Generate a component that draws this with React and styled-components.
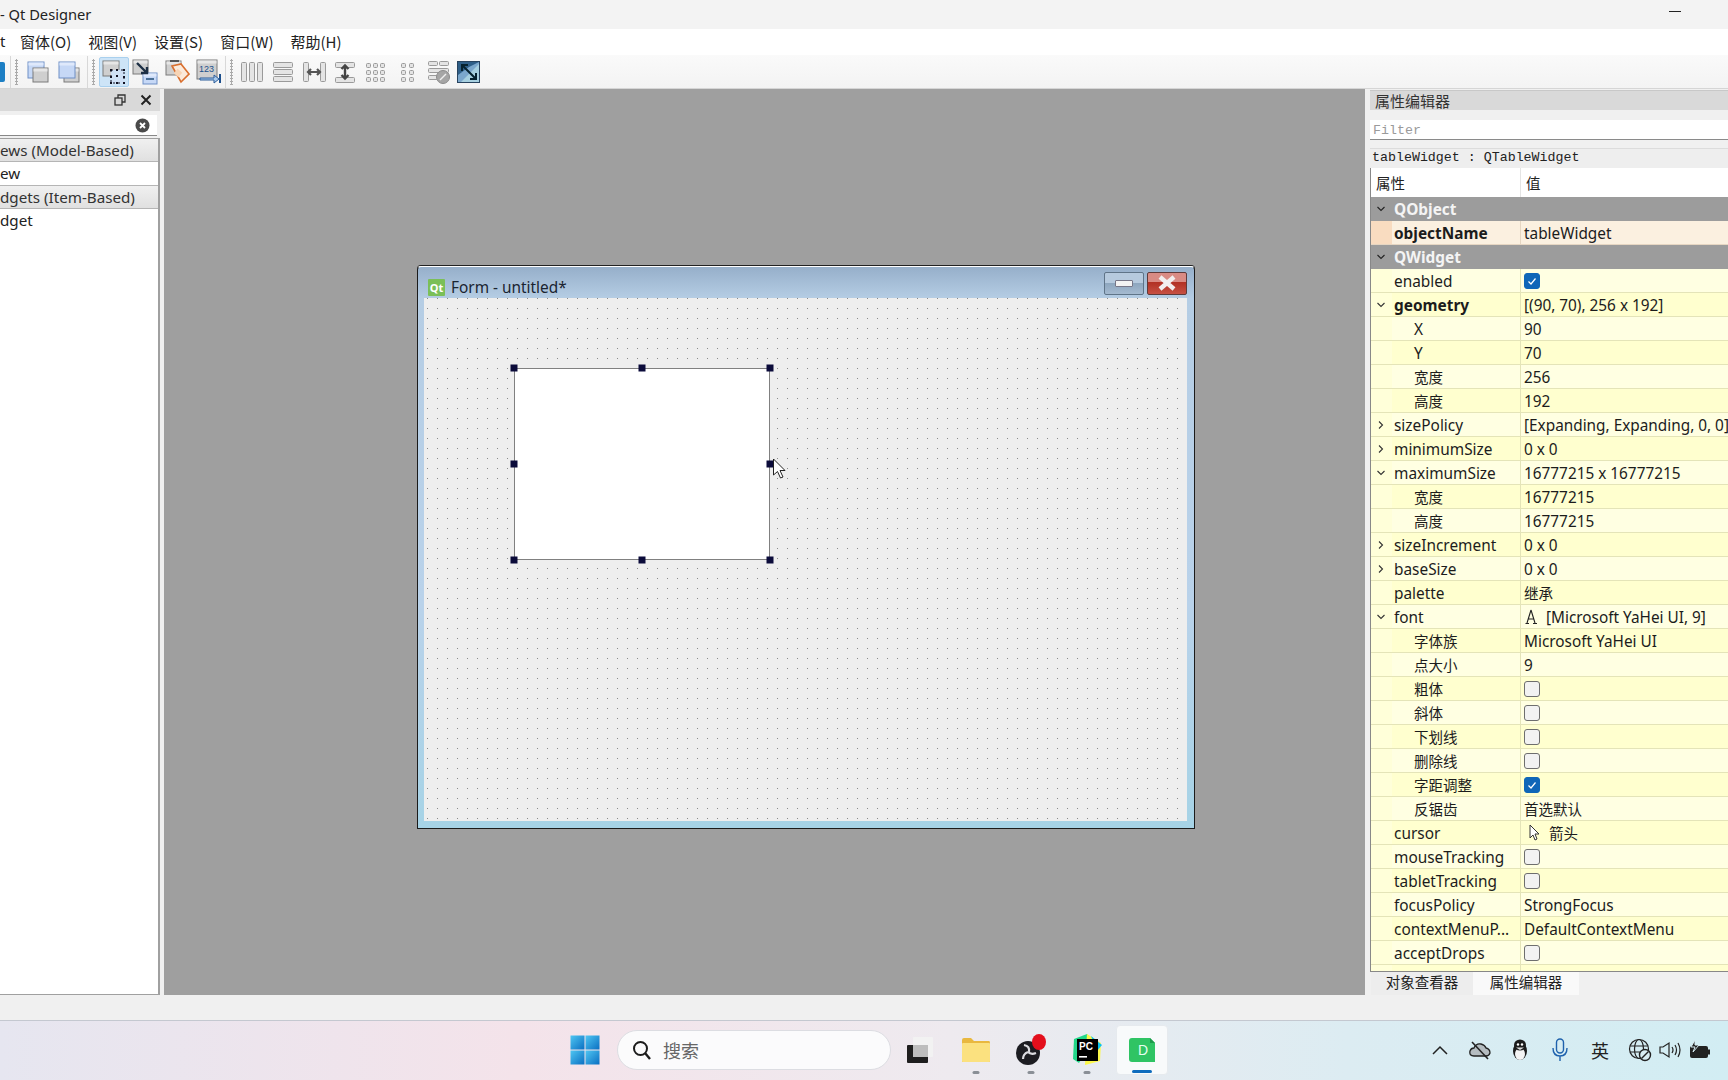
import React from 'react';
import styled, { createGlobalStyle } from 'styled-components';

const UI = '"Noto Sans", "Noto Sans CJK SC", sans-serif';
const CJK = '"Noto Sans CJK SC", "Noto Sans", sans-serif';
const MONO = '"Liberation Mono", "Noto Sans CJK SC", monospace';

const Global = createGlobalStyle`
  html, body { margin: 0; padding: 0; width: 1728px; height: 1080px; overflow: hidden; background: #f0f0f0; }
  * { box-sizing: border-box; }
`;

const Screen = styled.div`
  width: 1728px; height: 1080px; display: flex; flex-direction: column;
  font-family: ${UI}; font-size: 15px; color: #1c1c1c; overflow: hidden;
`;
const TitleBar = styled.div`
  height: 29px; flex: none; background: #f3f3f3; display: flex; align-items: center; padding-bottom: 2px;
  justify-content: space-between; font-size: 14.7px; padding-right: 47px; color: #222;
`;
const MinDash = styled.div`width: 12px; height: 1px; background: #222; margin-bottom: 4px;`;
const MenuBar = styled.div`
  height: 26px; flex: none; background: #fff; display: flex; align-items: center; gap: 17px; padding-bottom: 2px;
  font-family: ${CJK}; font-size: 15px; color: #222;
`;
const MenuClip = styled.span`width: 3px; font-family: ${UI}; white-space: nowrap;`;
const ToolBar = styled.div`
  height: 34px; flex: none; background: linear-gradient(#fafafa, #f3f3f3); padding-top: 1px;
  display: flex; align-items: center; border-bottom: 1px solid #d5d5d5; overflow: hidden;
`;
const ToolGroup = styled.div`display: flex; align-items: center; gap: ${p => p.$gap ?? 5}px;`;
const ToolSep = styled.div`
  width: 1px; height: 32px; background: #d8d8d8; margin: 0 ${p => p.$r ?? 4}px 0 ${p => p.$l ?? 4}px;
`;
const Grip = styled.div`
  width: 3px; height: 26px; margin-right: ${p => p.$r ?? 6}px;
  background-image: radial-gradient(circle at 1.5px 1.5px, #aaa 1px, transparent 1.2px);
  background-size: 3px 3px;
`;
const ToolBtn = styled.div`
  width: ${p => p.$w ?? 26}px; height: 30px; flex: none; display: flex; align-items: center; justify-content: center;
  ${p => p.$active && 'background: #cde4f7; border: 1px solid #a9d0ee; border-radius: 2px;'}
`;
const Main = styled.div`flex: 1; display: flex; min-height: 0; background: #f0f0f0;`;
const LeftDock = styled.div`width: 160px; flex: none; display: flex; flex-direction: column;`;
const DockHead = styled.div`
  height: 22px; flex: none; background: #d9d9d9; display: flex; align-items: center; justify-content: flex-end;
  gap: 14px; padding-right: 8px; color: #222;
`;
const SearchBox = styled.div`
  height: 21px; flex: none; margin: 4px 3px 2px 0; background: #fff; border-bottom: 1px solid #888;
  display: flex; align-items: center; justify-content: flex-end; padding-right: 7px;
`;
const WidgetList = styled.div`
  flex: 1; background: #fff; border: 1px solid #a0a0a0; border-left: none; border-right-width: 2px; font-size: 15.2px;
`;
const Category = styled.div`
  height: 21px; padding-bottom: 1px; background: linear-gradient(#f0f0f0, #e0e0e0); border-bottom: 1px solid #b5b5b5; border-top: ${p => p.$top ? '1px solid #b5b5b5' : 'none'};
  display: flex; align-items: center; white-space: nowrap; color: #333; box-sizing: content-box;
`;
const ListItem = styled.div`height: 23px; padding-bottom: 2px; display: flex; align-items: center; color: #222;`;
const Mdi = styled.div`flex: 1; position: relative; margin-left: 4px; background: #9f9f9f;`;
const FormWindow = styled.div`
  position: absolute; left: 253px; top: 177px; width: 778px; height: 563px;
  background: linear-gradient(#96afca 0, #b5cde4 5.6%, #b9d2ea 60%, #a6d3e6 100%);
  border: 1px solid #1b1b1b; border-top-color: #fff; border-radius: 4px 4px 0 0;
  box-shadow: 0 -1px 0 #222; padding: 0 7px 7px 6px; display: flex; flex-direction: column;
`;
const FormTitle = styled.div`
  height: 31px; flex: none; display: flex; align-items: center; padding: 9px 0 0 4px; gap: 6px; font-size: 15.4px; color: #1a2430;
`;
const QtBadge = styled.div`
  width: 17px; height: 17px; background: #7bbf58; color: #fff; font: bold 11px ${UI}; display: flex; align-items: center; justify-content: center; border-radius: 1px;
`;
const WinButtons = styled.div`margin-left: auto; display: flex; gap: 3px; margin-top: -8px; margin-right: 0;`;
const MinBtn = styled.div`
  width: 40px; height: 23px; border: 1px solid #5f7488; border-radius: 2px;
  background: linear-gradient(#b6cade 0 50%, #8ea7bf 50%, #a5bad0 100%);
  display: flex; align-items: center; justify-content: center;
  &::after { content: ''; width: 16px; height: 5px; border-radius: 1px; background: #f3f3f3; border: 1px solid #778; }
`;
const CloseBtn = styled.div`
  width: 40px; height: 23px; border: 1px solid #5f3a3a; border-radius: 2px;
  background: linear-gradient(#d98b84 0 45%, #b23124 45%, #c65043 100%);
  display: flex; align-items: center; justify-content: center;
`;
const Canvas = styled.div`
  flex: 1; position: relative; background-color: #eeeeee;
  background-image: radial-gradient(circle at 3.5px 0.5px, #8a8a8a 0.6px, transparent 0.75px);
  background-size: 10px 10px;
`;
const SelectedTable = styled.div`
  position: absolute; left: 90px; top: 70px; width: 256px; height: 192px; background: #fff; border: 1px solid #808080;
`;
const Handle = styled.div`
  position: absolute; width: 7px; height: 7px; background: #0b0b3a; transform: translate(-50%, -50%);
`;
const Pointer = styled.svg`position: absolute; left: 608px; top: 369px;`;
const RightGap = styled.div`width: 5px; flex: none;`;
const RightDock = styled.div`width: 358px; flex: none; display: flex; flex-direction: column;`;
const PropTitle = styled.div`
  height: 20px; margin-top: 1px; flex: none; background: #d9d9d9; border-top: 1px solid #c8c8c8; padding-left: 5px;
  font-family: ${CJK}; font-size: 15px; display: flex; align-items: center; color: #333;
`;
const FilterInput = styled.div`
  height: 20px; margin-top: 10px; padding-top: 2px; flex: none; background: #fff; border-bottom: 1px solid #8a8a8a; padding-left: 3px;
  font: 13.3px ${MONO}; color: #9a9a9a; display: flex; align-items: center;
`;
const ObjectLabel = styled.div`
  height: 20px; margin-top: 8px; padding-bottom: 3px; flex: none; background: #eeeeee; border-top: 1px solid #dcdcdc; padding-left: 2px;
  font: 13.3px ${MONO}; color: #222; display: flex; align-items: center; white-space: pre;
`;
const PropTable = styled.div`
  flex: none; height: 804px; overflow: hidden; border-left: 1px solid #888; border-bottom: 1px solid #888; margin-left: 0;
`;
const HeadRow = styled.div`
  height: 29px; display: grid; grid-template-columns: 149px 1fr; background: #fff; font-family: ${CJK}; font-size: 14.5px; color: #222;
`;
const HeadCell = styled.div`
  display: flex; align-items: center; padding-left: 5px; & + & { border-left: 1px solid #e4e4e4; }
`;
const Row = styled.div`
  height: 24px; display: grid; grid-template-columns: 21px 128px 1fr; align-items: stretch;
  background: ${p => p.$bg}; border-bottom: 1px solid ${p => p.$line};
  color: ${p => p.$group ? '#fff' : '#1c1c1c'}; font-size: 15.4px;
`;
const Branch = styled.div`
  display: flex; align-items: center; justify-content: center; padding-right: 2px; background: ${p => p.$bg};
`;
const NameCell = styled.div`
  display: flex; align-items: center; padding-left: ${p => p.$sub ? 22 : 2}px; white-space: nowrap; overflow: hidden;
  padding-top: ${p => p.$cjk ? 0 : 2}px;
  font-weight: ${p => p.$bold ? 700 : 400};
  font-family: ${p => p.$cjk ? CJK : UI}; ${p => p.$cjk && 'font-size: 14.5px;'}
`;
const ValueCell = styled.div`
  display: flex; align-items: center; padding-left: 3px; gap: 8px; white-space: nowrap; overflow: hidden; font-size: 15.35px;
  border-left: ${p => p.$group ? 'none' : `1px solid ${p.$line}`};
`;
const ValueText = styled.span`margin-top: 0;`;
const GroupName = styled.div`
  grid-column: 2 / 4; display: flex; align-items: center; padding: 2px 0 0 2px; font-weight: 700; font-size: 15.4px; color: #f4f4f4;
`;
const Check = styled.div`
  width: 16px; height: 16px; margin-left: 0; border-radius: 3px; display: flex; align-items: center; justify-content: center;
  background: ${p => p.$on ? '#0f66b8' : '#f2f2f2'}; border: 1px solid ${p => p.$on ? '#0f66b8' : '#6e6e6e'};
`;
const CjkVal = styled.span`font-family: ${CJK}; font-size: 14.5px;`;
const TabBar = styled.div`flex: 1; display: flex; align-items: flex-start; padding-left: 1px; background: #f0f0f0; font-family: ${CJK}; font-size: 14.5px;`;
const Tab = styled.div`
  height: 23px; padding-bottom: 4px; width: ${p => p.$w}px; display: flex; align-items: center; justify-content: center;
  background: ${p => p.$on ? '#f9f9f9' : '#ededed'}; color: #222;
`;
const StatusBar = styled.div`height: 25px; flex: none; background: #f0f0f0;`;
const Taskbar = styled.div`
  height: 60px; flex: none; position: relative; display: flex; align-items: center; border-top: 1px solid #c4c8d0; padding-bottom: 2px;
  background: linear-gradient(90deg, #e6e6f0 0%, #f4e3ea 30%, #eeeaef 55%, #dcecf2 78%, #d2edf3 100%);
`;
const Centre = styled.div`display: flex; align-items: center; margin-left: 570px; height: 100%;`;
const SearchPill = styled.div`
  width: 274px; height: 40px; margin-left: 17px; border-radius: 20px; background: #fbfbfc; border: 1px solid #dcdde2;
  display: flex; align-items: center; padding-left: 13px; gap: 10px; font-family: ${CJK}; font-size: 18px; color: #666;
`;
const TaskIcon = styled.div`
  position: relative; width: ${p => p.$w ?? 55}px; height: 50px; display: flex; align-items: center; justify-content: center;
  margin-left: ${p => p.$ml ?? 0}px;
  ${p => p.$active && 'background: #f8fafb; border: 1px solid #e6eaee; border-radius: 4px;'}
`;
const RunDot = styled.div`
  position: absolute; bottom: 1px; left: 50%; transform: translateX(-50%); height: 3px; border-radius: 2px;
  width: ${p => p.$active ? 20 : 7}px; background: ${p => p.$active ? '#0f6cbd' : '#8a8f96'};
`;
const Tray = styled.div`
  margin-left: auto; margin-right: 13px; display: flex; align-items: center; gap: 0; height: 100%;
`;
const TrayIcon = styled.div`
  width: ${p => p.$w ?? 40}px; margin-left: ${p => p.$ml ?? 0}px; display: flex; align-items: center; justify-content: center; color: #222;
  font-family: ${CJK}; font-size: 18px;
`;

/* toolbar drawings */
const Win = ({ x, y, w = 16, h = 15, blue }) => (
  <g>
    <rect x={x} y={y} width={w} height={h} fill={blue ? '#c6d8f6' : '#cfcfcf'} stroke={blue ? '#6f8fc5' : '#7a7a7a'} />
    <rect x={x + .5} y={y + .5} width={w - 1} height={3} fill={blue ? '#dfe9fb' : '#e6e6e6'} />
  </g>
);
const I = ({ children, w = 26, h = 26 }) => <svg width={w} height={h} viewBox="0 0 26 26">{children}</svg>;

const gray = { fill: '#e4e4e4', stroke: '#9a9a9a' };
const Bar = ({ x, y, w, h }) => <rect x={x + .5} y={y + .5} width={w} height={h} rx="1" {...gray} />;

const IconFront = () => <I><Win x={3} y={3} w={16} h={16} blue /><Win x={8} y={9} w={15} h={14} /></I>;
const IconBack = () => <I><Win x={8} y={9} w={15} h={14} /><Win x={3} y={3} w={16} h={16} blue /></I>;
const IconWidgetEdit = () => (
  <I>
    <Win x={2} y={2} w={16} h={15} />
    <rect x={10} y={11} width={13} height={13} fill="#cfe0f5" stroke="#112" strokeDasharray="2 3" />
    {[[9, 10], [15, 10], [22, 10], [9, 17], [22, 17], [9, 23], [15, 23], [22, 23]].map(([a, b]) => <rect key={a + '-' + b} x={a} y={b} width="2" height="2" fill="#112" />)}
    <rect x={15} y={16} width="2" height="2" fill="#112" />
  </I>
);
const IconSignals = () => (
  <I>
    <Win x={1} y={1} w={15} h={14} />
    <Win x={11} y={14} w={14} h={11} blue />
    <rect x={14} y={19} width={8} height={2} fill="#4a6f96" />
    <path d="M5 4 L15 14 M15 8 V14 H9" stroke="#1d2f44" strokeWidth="2.4" fill="none" />
  </I>
);
const IconBuddy = () => (
  <I>
    <Win x={2} y={2} w={15} h={14} />
    <rect x={6} y={1} width={9} height={2} fill="#555" />
    <path d="M8 7 L17 5 L25 15 L17 23 Z" fill="#fbeadb" stroke="#d96f2e" strokeWidth="1.6" />
    <rect x={11} y={11} width="6" height="6" transform="rotate(40 14 14)" fill="#f7d4b5" />
  </I>
);
const IconTab = () => (
  <I>
    <Win x={1} y={1} w={20} h={19} />
    <text x="3" y="13" fontSize="9" fontFamily="Liberation Sans" fill="#1c4f8c">123</text>
    <path d="M4 19 H18 V16 L23 20 L18 24 V21 H4 Z" fill="#a9cbee" stroke="#2b5d9a" />
    <rect x={23} y={15} width="2" height="9" fill="#1c4f8c" />
  </I>
);
const IconHoriz = () => <I><Bar x={2} y={3} w={5} h={19} /><Bar x={10} y={3} w={5} h={19} /><Bar x={18} y={3} w={5} h={19} /></I>;
const IconVert = () => <I><Bar x={3} y={3} w={19} h={5} /><Bar x={3} y={10} w={19} h={5} /><Bar x={3} y={17} w={19} h={5} /></I>;
const IconSplitH = () => (
  <I>
    <Bar x={2} y={3} w={5} h={19} /><Bar x={19} y={3} w={5} h={19} />
    <path d="M7 13 H19 M10 10 L7 13 L10 16 M16 10 L19 13 L16 16" stroke="#555" strokeWidth="2.2" fill="none" />
  </I>
);
const IconSplitV = () => (
  <I>
    <Bar x={3} y={3} w={19} h={5} /><Bar x={3} y={18} w={19} h={5} />
    <path d="M13 7 V19 M9.5 10 L13 6.5 L16.5 10 M9.5 16 L13 19.5 L16.5 16" stroke="#444" strokeWidth="2.4" fill="none" />
  </I>
);
const cells = (xs, ys) => xs.flatMap(a => ys.map(b => <Bar key={a + '.' + b} x={a} y={b} w={4} h={4} />));
const IconGrid = () => <I>{cells([3, 10, 17], [4, 11, 18])}</I>;
const IconForm = () => <I>{cells([7, 15], [4, 11, 18])}</I>;
const IconBreak = () => (
  <I>
    <Bar x={3} y={2} w={9} h={4} /><Bar x={14} y={2} w={9} h={4} />
    <Bar x={3} y={9} w={20} h={4} /><Bar x={3} y={16} w={9} h={4} />
    <circle cx="18" cy="18" r="6.5" fill="#a5a5a5" stroke="#8b8b8b" />
    <path d="M15 21 L21 15" stroke="#eee" strokeWidth="1.4" />
  </I>
);
const IconAdjust = () => (
  <I>
    <rect x="1.5" y="2.5" width="22" height="21" fill="#7ba7cc" stroke="#28445f" />
    <path d="M2 3 H23 L13 8 L2 16 Z" fill="#2f5f88" />
    <path d="M23 5 V23 H5 Z" fill="#a7d0e0" />
    <path d="M6 6 L20 20 M6 12 V6 H12 M20 14 V20 H14" stroke="#06222f" strokeWidth="2" fill="none" />
  </I>
);

const Chevron = ({ open, color = '#333' }) => (
  <svg width="10" height="10" viewBox="0 0 10 10">
    <path d={open ? 'M1.5 3 L5 6.5 L8.5 3' : 'M3 1.5 L6.5 5 L3 8.5'} stroke={color} strokeWidth="1.1" fill="none" />
  </svg>
);

const YELLOW_A = { bg: '#ffffcf', side: '#ffffd9', line: '#e4e4b8' };
const YELLOW_B = { bg: '#ffffe2', side: '#ffffd9', line: '#e4e4b8' };
const PEACH = { bg: '#fbf0e0', side: '#f9dcc0', line: '#e6d6c2' };

const rows = [
  { group: 'QObject' },
  { name: 'objectName', bold: 1, val: 'tableWidget', peach: 1 },
  { group: 'QWidget' },
  { name: 'enabled', check: 1 },
  { name: 'geometry', bold: 1, open: 1, val: '[(90, 70), 256 x 192]' },
  { name: 'X', sub: 1, val: '90' },
  { name: 'Y', sub: 1, val: '70' },
  { name: '宽度', sub: 1, cjk: 1, val: '256' },
  { name: '高度', sub: 1, cjk: 1, val: '192' },
  { name: 'sizePolicy', closed: 1, val: '[Expanding, Expanding, 0, 0]' },
  { name: 'minimumSize', closed: 1, val: '0 x 0' },
  { name: 'maximumSize', open: 1, val: '16777215 x 16777215' },
  { name: '宽度', sub: 1, cjk: 1, val: '16777215' },
  { name: '高度', sub: 1, cjk: 1, val: '16777215' },
  { name: 'sizeIncrement', closed: 1, val: '0 x 0' },
  { name: 'baseSize', closed: 1, val: '0 x 0' },
  { name: 'palette', cval: '继承' },
  { name: 'font', open: 1, font: 1, val: '[Microsoft YaHei UI, 9]' },
  { name: '字体族', sub: 1, cjk: 1, val: 'Microsoft YaHei UI' },
  { name: '点大小', sub: 1, cjk: 1, val: '9' },
  { name: '粗体', sub: 1, cjk: 1, check: 0 },
  { name: '斜体', sub: 1, cjk: 1, check: 0 },
  { name: '下划线', sub: 1, cjk: 1, check: 0 },
  { name: '删除线', sub: 1, cjk: 1, check: 0 },
  { name: '字距调整', sub: 1, cjk: 1, check: 1 },
  { name: '反锯齿', sub: 1, cjk: 1, cval: '首选默认' },
  { name: 'cursor', arrow: 1, cval: '箭头' },
  { name: 'mouseTracking', check: 0 },
  { name: 'tabletTracking', check: 0 },
  { name: 'focusPolicy', val: 'StrongFocus' },
  { name: 'contextMenuP...', val: 'DefaultContextMenu' },
  { name: 'acceptDrops', check: 0 },
  { name: '', val: '' },
];

const PropRow = ({ r, i }) => {
  if (r.group) {
    return (
      <Row $bg="#9c9c9c" $line="#9c9c9c" $group>
        <Branch $bg="#9c9c9c"><Chevron open color="#222" /></Branch>
        <GroupName>{r.group}</GroupName>
      </Row>
    );
  }
  const t = r.peach ? PEACH : i % 2 === 0 ? YELLOW_A : YELLOW_B;
  return (
    <Row $bg={t.bg} $line={t.line}>
      <Branch $bg={t.side}>{r.open ? <Chevron open /> : r.closed ? <Chevron /> : null}</Branch>
      <NameCell $sub={r.sub} $bold={r.bold} $cjk={r.cjk}>{r.name}</NameCell>
      <ValueCell $line={t.line}>
        {r.check !== undefined && (
          <Check $on={r.check}>
            {r.check ? <svg width="10" height="10" viewBox="0 0 10 10"><path d="M1.5 5.5 L4 8 L8.5 2.5" stroke="#fff" strokeWidth="1.2" fill="none" /></svg> : null}
          </Check>
        )}
        {r.font && <svg width="14" height="18" viewBox="0 0 14 18"><path d="M7 2 L3 15 M7 2 L11 15 M4.5 11 H9.5 M1.5 15.5 H5 M9 15.5 H13" stroke="#222" strokeWidth="1.1" fill="none" /></svg>}
        {r.arrow && <svg width="14" height="18" viewBox="0 0 14 18" style={{ marginLeft: 3 }}><path d="M3 1 V14 L6 11 L8 16 L10 15 L8 10 L12 10 Z" fill="#fff" stroke="#333" strokeWidth="1" /></svg>}
        {r.val && <ValueText>{r.val}</ValueText>}
        {r.cval && <CjkVal>{r.cval}</CjkVal>}
      </ValueCell>
    </Row>
  );
};

const handles = [[0, 0], [50, 0], [100, 0], [0, 50], [100, 50], [0, 100], [50, 100], [100, 100]];

const WinLogo = () => (
  <svg width="30" height="30" viewBox="0 0 30 30">
    <defs>
      <linearGradient id="wl" x1="0" y1="0" x2="1" y2="1"><stop offset="0" stopColor="#4fc6f2" /><stop offset="1" stopColor="#0a6fc2" /></linearGradient>
    </defs>
    <rect x="0.5" y="0.5" width="14" height="14" fill="url(#wl)" />
    <rect x="15.5" y="0.5" width="14" height="14" fill="url(#wl)" />
    <rect x="0.5" y="15.5" width="14" height="14" fill="url(#wl)" />
    <rect x="15.5" y="15.5" width="14" height="14" fill="url(#wl)" />
  </svg>
);
const SearchGlyph = () => (
  <svg width="22" height="22" viewBox="0 0 22 22"><circle cx="9.5" cy="9.5" r="6.5" stroke="#1c1c1c" strokeWidth="2" fill="none" /><path d="M14 14 L19 20" stroke="#1c1c1c" strokeWidth="2.4" /></svg>
);
const TaskView = () => (
  <svg width="30" height="30" viewBox="0 0 30 30">
    <rect x="2" y="10" width="21" height="18" rx="1" fill="#1e1e1e" />
    <rect x="8" y="2" width="20" height="20" rx="1" fill="#f2f2f2" />
    <rect x="8" y="10" width="15" height="12" fill="#bdbdbd" />
  </svg>
);
const Folder = () => (
  <svg width="30" height="28" viewBox="0 0 30 28">
    <path d="M1 4 Q1 2 3 2 H10 L13 5 H28 Q29 5 29 7 V25 Q29 26 28 26 H2 Q1 26 1 25 Z" fill="#e9b83f" />
    <rect x="1" y="7" width="28" height="19" rx="1" fill="#fbe17f" />
  </svg>
);
const Obs = () => (
  <svg width="32" height="34" viewBox="0 0 32 34">
    <circle cx="13" cy="20" r="12" fill="#1d1d22" />
    <g fill="none" stroke="#dcdce0" strokeWidth="2.2"><path d="M9 12 Q15 13 14 19" /><path d="M21 20 Q16 22 13 19" /><path d="M8 26 Q8 21 13 19" /></g>
    <ellipse cx="24" cy="9" rx="7" ry="8" fill="#e30f1c" />
  </svg>
);
const PyCharm = () => (
  <svg width="32" height="34" viewBox="0 0 32 34">
    <path d="M3 6 L16 1 L22 8 L8 30 L2 26 Z" fill="#21d789" />
    <path d="M16 1 L30 10 L29 28 L14 32 Z" fill="#fcf84a" />
    <path d="M20 3 L31 12 L26 18 Z" fill="#07c3f2" />
    <rect x="6" y="6" width="21" height="22" fill="#000" />
    <text x="8" y="17" fontSize="10" fontWeight="700" fontFamily="Liberation Sans" fill="#fff">PC</text>
    <rect x="8" y="23" width="8" height="1.6" fill="#fff" />
  </svg>
);
const Designer = () => (
  <svg width="28" height="26" viewBox="0 0 28 26">
    <path d="M1 4 Q1 1 4 1 H22 L27 6 V25 H4 Q1 25 1 22 Z" fill="#2fc464" />
    <path d="M22 1 L27 6 H22 Z" fill="#1d9a4a" />
    <text x="10" y="18" fontSize="14" fontFamily="Liberation Sans" fill="#e6fff0">D</text>
  </svg>
);
const Cloud = () => (
  <svg width="22" height="20" viewBox="0 0 22 20">
    <path d="M5 16 Q0 16 1 11 Q2 8 5 8 Q7 3 12 4 Q16 5 17 8 Q21 9 21 13 Q20 16 17 16 Z" fill="#b5bcc0" stroke="#222" strokeWidth="1.3" />
    <path d="M3 2 L19 19" stroke="#222" strokeWidth="1.6" />
  </svg>
);
const Penguin = () => (
  <svg width="18" height="22" viewBox="0 0 18 22">
    <ellipse cx="9" cy="12" rx="7" ry="9" fill="#1c1c1c" />
    <ellipse cx="9" cy="15" rx="5" ry="6" fill="#f4f4f4" />
    <ellipse cx="9" cy="6" rx="6" ry="5.5" fill="#1c1c1c" />
    <circle cx="7" cy="5.5" r="1.2" fill="#fff" /><circle cx="11" cy="5.5" r="1.2" fill="#fff" />
    <path d="M5 8.5 H13 L9 11 Z" fill="#ddd" />
  </svg>
);
const Mic = () => (
  <svg width="18" height="24" viewBox="0 0 18 24" fill="none" stroke="#1f62ad" strokeWidth="1.4">
    <rect x="5.5" y="1" width="7" height="14" rx="3.5" />
    <path d="M2 10 Q2 18 9 18 Q16 18 16 10 M9 18 V23" />
  </svg>
);
const Globe = () => (
  <svg width="24" height="24" viewBox="0 0 24 24" fill="none" stroke="#222" strokeWidth="1.2">
    <circle cx="11" cy="11" r="9.5" />
    <ellipse cx="11" cy="11" rx="4.5" ry="9.5" />
    <path d="M2 8 H20 M2 14 H20" />
    <circle cx="17" cy="17" r="5.5" fill="#d8ecf2" strokeWidth="1.4" />
    <path d="M13.5 20.5 L20.5 13.5" strokeWidth="1.4" />
  </svg>
);
const Speaker = () => (
  <svg width="24" height="20" viewBox="0 0 24 20" fill="none" stroke="#222" strokeWidth="1.2">
    <path d="M2 7 H5 L11 3 V17 L5 13 H2 Z" />
    <path d="M14 7 Q16 10 14 13 M17 5 Q20 10 17 15 M20 3 Q24 10 20 17" />
  </svg>
);
const Battery = () => (
  <svg width="24" height="22" viewBox="0 0 24 22">
    <rect x="2" y="7" width="18" height="12" rx="2" fill="#222" />
    <rect x="20" y="10.5" width="2" height="5" fill="#222" />
    <path d="M7 1 L3 8 H7 L5 13 L11 6 H7 Z" fill="#222" stroke="#d8ecf2" strokeWidth="1" />
  </svg>
);

export default function App() {
  return (
    <Screen>
      <Global />
      <TitleBar><span>- Qt Designer</span><MinDash /></TitleBar>
      <MenuBar>
        <MenuClip>t</MenuClip>
        <span>窗体(O)</span><span>视图(V)</span><span>设置(S)</span><span>窗口(W)</span><span>帮助(H)</span>
      </MenuBar>
      <ToolBar>
        <svg width="5" height="20" viewBox="0 0 5 20"><rect x="-4" y="0" width="9" height="20" rx="2" fill="#1d7fc4" /></svg>
        <ToolSep $l={5} $r={4} />
        <Grip $r={7} />
        <ToolGroup $gap={5}>
          <ToolBtn><IconFront /></ToolBtn>
          <ToolBtn><IconBack /></ToolBtn>
        </ToolGroup>
        <ToolSep $l={5} $r={4} />
        <Grip $r={4} />
        <ToolGroup $gap={1}>
          <ToolBtn $active $w={30}><IconWidgetEdit /></ToolBtn>
          <ToolBtn $w={30}><IconSignals /></ToolBtn>
          <ToolBtn $w={31}><IconBuddy /></ToolBtn>
          <ToolBtn $w={31}><IconTab /></ToolBtn>
        </ToolGroup>
        <ToolSep $l={1} $r={4} />
        <Grip $r={6} />
        <ToolGroup $gap={5}>
          <ToolBtn><IconHoriz /></ToolBtn>
          <ToolBtn><IconVert /></ToolBtn>
          <ToolBtn><IconSplitH /></ToolBtn>
          <ToolBtn><IconSplitV /></ToolBtn>
          <ToolBtn><IconGrid /></ToolBtn>
          <ToolBtn><IconForm /></ToolBtn>
          <ToolBtn><IconBreak /></ToolBtn>
          <ToolBtn><IconAdjust /></ToolBtn>
        </ToolGroup>
      </ToolBar>
      <Main>
        <LeftDock>
          <DockHead>
            <svg width="12" height="12" viewBox="0 0 12 12" fill="none" stroke="#333" strokeWidth="1.3"><rect x="1" y="4" width="7" height="7" /><path d="M4 4 V1 H11 V8 H8" /></svg>
            <svg width="12" height="12" viewBox="0 0 12 12" stroke="#222" strokeWidth="2"><path d="M1.5 1.5 L10.5 10.5 M10.5 1.5 L1.5 10.5" /></svg>
          </DockHead>
          <SearchBox>
            <svg width="15" height="15" viewBox="0 0 15 15"><circle cx="7.5" cy="7.5" r="7" fill="#4a4a4a" /><path d="M5 5 L10 10 M10 5 L5 10" stroke="#fff" strokeWidth="1.8" /></svg>
          </SearchBox>
          <WidgetList>
            <Category>ews (Model-Based)</Category>
            <ListItem>ew</ListItem>
            <Category $top>dgets (Item-Based)</Category>
            <ListItem>dget</ListItem>
          </WidgetList>
        </LeftDock>
        <Mdi>
          <FormWindow>
            <FormTitle>
              <QtBadge>Qt</QtBadge>
              <span>Form - untitled*</span>
              <WinButtons>
                <MinBtn />
                <CloseBtn>
                  <svg width="20" height="16" viewBox="0 0 20 16"><path d="M3 2 L17 14 M17 2 L3 14" stroke="#f2efef" strokeWidth="4.4" /></svg>
                </CloseBtn>
              </WinButtons>
            </FormTitle>
            <Canvas>
              <SelectedTable />
              {handles.map(([a, b]) => (
                <Handle key={a + '_' + b} style={{ left: 90 + 2.56 * a, top: 70 + 1.92 * b }} />
              ))}
            </Canvas>
          </FormWindow>
          <Pointer width="14" height="22" viewBox="0 0 14 22">
            <path d="M1.5 1 V17 L5.5 13.5 L8.5 20 L11 19 L8 12.5 L13 12.5 Z" fill="#fff" stroke="#222" strokeWidth="1" />
          </Pointer>
        </Mdi>
        <RightGap />
        <RightDock>
          <PropTitle>属性编辑器</PropTitle>
          <FilterInput>Filter</FilterInput>
          <ObjectLabel>tableWidget : QTableWidget</ObjectLabel>
          <PropTable>
            <HeadRow><HeadCell>属性</HeadCell><HeadCell>值</HeadCell></HeadRow>
            {rows.map((r, i) => <PropRow key={i} r={r} i={i} />)}
          </PropTable>
          <TabBar>
            <Tab $w={102}>对象查看器</Tab>
            <Tab $on $w={106}>属性编辑器</Tab>
          </TabBar>
        </RightDock>
      </Main>
      <StatusBar />
      <Taskbar>
        <Centre>
          <WinLogo />
          <SearchPill><SearchGlyph />搜索</SearchPill>
          <TaskIcon $w={58}><TaskView /></TaskIcon>
          <TaskIcon $w={54}><Folder /><RunDot /></TaskIcon>
          <TaskIcon $w={56}><Obs /><RunDot /></TaskIcon>
          <TaskIcon $w={56}><PyCharm /><RunDot /></TaskIcon>
          <TaskIcon $w={52} $ml={1} $active><Designer /><RunDot $active /></TaskIcon>
        </Centre>
        <Tray>
          <TrayIcon><svg width="18" height="12" viewBox="0 0 18 12"><path d="M2 10 L9 3 L16 10" stroke="#222" strokeWidth="1.5" fill="none" /></svg></TrayIcon>
          <TrayIcon><Cloud /></TrayIcon>
          <TrayIcon><Penguin /></TrayIcon>
          <TrayIcon><Mic /></TrayIcon>
          <TrayIcon>英</TrayIcon>
          <TrayIcon $w={30} $ml={5}><Globe /></TrayIcon>
          <TrayIcon $w={30}><Speaker /></TrayIcon>
          <TrayIcon $w={30}><Battery /></TrayIcon>
        </Tray>
      </Taskbar>
    </Screen>
  );
}
